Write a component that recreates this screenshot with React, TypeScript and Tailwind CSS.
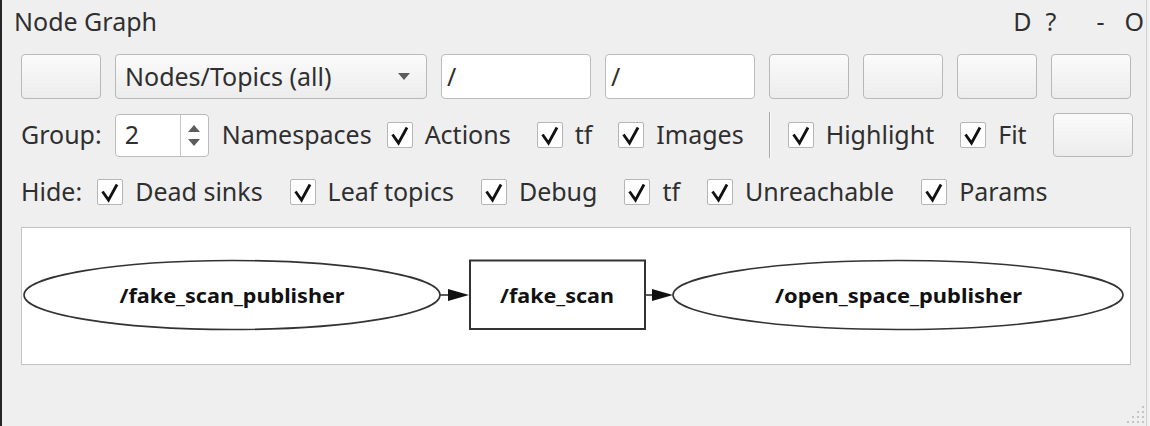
import React from "react";

function Btn({ className = "" }: { className?: string }) {
  return (
    <div
      className={`rounded-[4px] border border-[#b9b9b9] bg-gradient-to-b from-[#fbfbfb] to-[#ececec] ${className}`}
    />
  );
}

function Check({ label, className = "" }: { label: string; className?: string }) {
  return (
    <div className={`flex items-center gap-3 ${className}`}>
      <span className="w-[26px] h-[26px] shrink-0 bg-white border border-[#b6b6b6] rounded-[2px] flex items-center justify-center">
        <svg width="24" height="24" viewBox="0 0 24 24">
          <path d="M4.5 11.5 L10.5 20 L19 4.5" stroke="#111" strokeWidth="2.8" fill="none" strokeLinejoin="miter" />
        </svg>
      </span>
      <span>{label}</span>
    </div>
  );
}

function Graph() {
  return (
    <svg width="1108" height="136" viewBox="0 0 1108 136" className="block">
      <g fill="none" stroke="#333" strokeWidth="1.6">
        <ellipse cx="210" cy="67" rx="208" ry="34.5" />
        <ellipse cx="876" cy="67" rx="225" ry="34.5" />
        <rect x="448" y="32.5" width="175" height="68.5" strokeWidth="2" />
        <line x1="418" y1="67" x2="428" y2="67" />
        <line x1="623" y1="67" x2="632" y2="67" />
      </g>
      <polygon points="426,61 447,67 426,73" fill="#111" />
      <polygon points="630,61 651,67 630,73" fill="#111" />
      <g fontFamily="'Noto Sans', sans-serif" fontWeight="700" fontSize="20" fill="#111" textAnchor="middle">
        <text x="210" y="75" textLength="225" lengthAdjust="spacingAndGlyphs">/fake_scan_publisher</text>
        <text x="535" y="75" textLength="114" lengthAdjust="spacingAndGlyphs">/fake_scan</text>
        <text x="876.5" y="75" textLength="247" lengthAdjust="spacingAndGlyphs">/open_space_publisher</text>
      </g>
    </svg>
  );
}

export default function App() {
  return (
    <div
      className="w-[1150px] h-[426px] bg-[#efefef] flex overflow-hidden text-[25px] text-[#2f2f2f]"
      style={{ fontFamily: "'Noto Sans', sans-serif" }}
    >
      <div className="w-[2px] shrink-0 bg-[#262626]" />
      <div className="relative w-[1145px] shrink-0 border-r border-[#d0d0d0] flex flex-col">
        {/* title bar */}
        <div className="h-[44px] flex items-center pl-3 pr-[2px]">
          <span>Node Graph</span>
          <div className="ml-auto flex items-center">
            <span>D</span>
            <span className="ml-[14px]">?</span>
            <span className="ml-[40px]">-</span>
            <span className="ml-[20px]">O</span>
          </div>
        </div>

        {/* row 1 */}
        <div className="mt-[10px] pl-[19px] flex gap-[14px] h-[45px]">
          <Btn className="w-[80px]" />
          <div className="w-[312px] rounded-[4px] border border-[#b9b9b9] bg-gradient-to-b from-[#fbfbfb] to-[#ececec] flex items-center pl-[9px] pr-[16px]">
            <span>Nodes/Topics (all)</span>
            <svg width="12" height="7" viewBox="0 0 12 7" className="ml-auto">
              <polygon points="0,0 12,0 6,7" fill="#5c5c5c" />
            </svg>
          </div>
          <div className="w-[150px] rounded-[4px] border border-[#bcbcbc] bg-white flex items-center pl-[5px]">/</div>
          <div className="w-[150px] rounded-[4px] border border-[#bcbcbc] bg-white flex items-center pl-[5px]">/</div>
          <Btn className="w-[80px]" />
          <Btn className="w-[80px]" />
          <Btn className="w-[80px]" />
          <Btn className="w-[80px]" />
        </div>

        {/* row 2 */}
        <div className="mt-[14px] pl-[19px] flex items-center h-[44px]">
          <span>Group:</span>
          <div className="ml-[13px] w-[94px] h-[43px] rounded-[4px] border border-[#bcbcbc] bg-white flex">
            <span className="flex-1 flex items-center pl-[9px]">2</span>
            <div className="w-[28px] border-l border-[#c6c6c6] flex flex-col items-center justify-center gap-[7px]">
              <svg width="12" height="7" viewBox="0 0 12 7">
                <polygon points="0,7 12,7 6,0" fill="#5c5c5c" />
              </svg>
              <svg width="12" height="7" viewBox="0 0 12 7">
                <polygon points="0,0 12,0 6,7" fill="#5c5c5c" />
              </svg>
            </div>
          </div>
          <span className="ml-[13px]">Namespaces</span>
          <Check label="Actions" className="ml-[15px]" />
          <Check label="tf" className="ml-[26px]" />
          <Check label="Images" className="ml-[26px]" />
          <div className="ml-[25px] w-[2px] h-[46px] border-l border-[#a9a9a9] border-r border-r-[#fafafa]" />
          <Check label="Highlight" className="ml-[17px]" />
          <Check label="Fit" className="ml-[26px]" />
          <Btn className="ml-[26px] w-[80px] h-[44px]" />
        </div>

        {/* row 3 */}
        <div className="mt-[13px] pl-[19px] flex items-center h-[44px]">
          <span>Hide:</span>
          <Check label="Dead sinks" className="ml-[15px]" />
          <Check label="Leaf topics" className="ml-[27px]" />
          <Check label="Debug" className="ml-[27px]" />
          <Check label="tf" className="ml-[27px]" />
          <Check label="Unreachable" className="ml-[27px]" />
          <Check label="Params" className="ml-[27px]" />
        </div>

        {/* graph view */}
        <div className="mt-[13px] ml-[19px] w-[1110px] h-[138px] bg-white border border-[#c4c4c4]">
          <Graph />
        </div>

        {/* size grip */}
        <svg width="20" height="20" viewBox="0 0 20 20" className="absolute right-0 bottom-[2px]">
          <g fill="#c4c4c4">
            <rect x="16" y="2" width="2" height="2" />
            <rect x="11" y="7" width="2" height="2" />
            <rect x="16" y="7" width="2" height="2" />
            <rect x="6" y="12" width="2" height="2" />
            <rect x="11" y="12" width="2" height="2" />
            <rect x="16" y="12" width="2" height="2" />
            <rect x="1" y="17" width="2" height="2" />
            <rect x="6" y="17" width="2" height="2" />
            <rect x="11" y="17" width="2" height="2" />
            <rect x="16" y="17" width="2" height="2" />
          </g>
        </svg>
      </div>
    </div>
  );
}
